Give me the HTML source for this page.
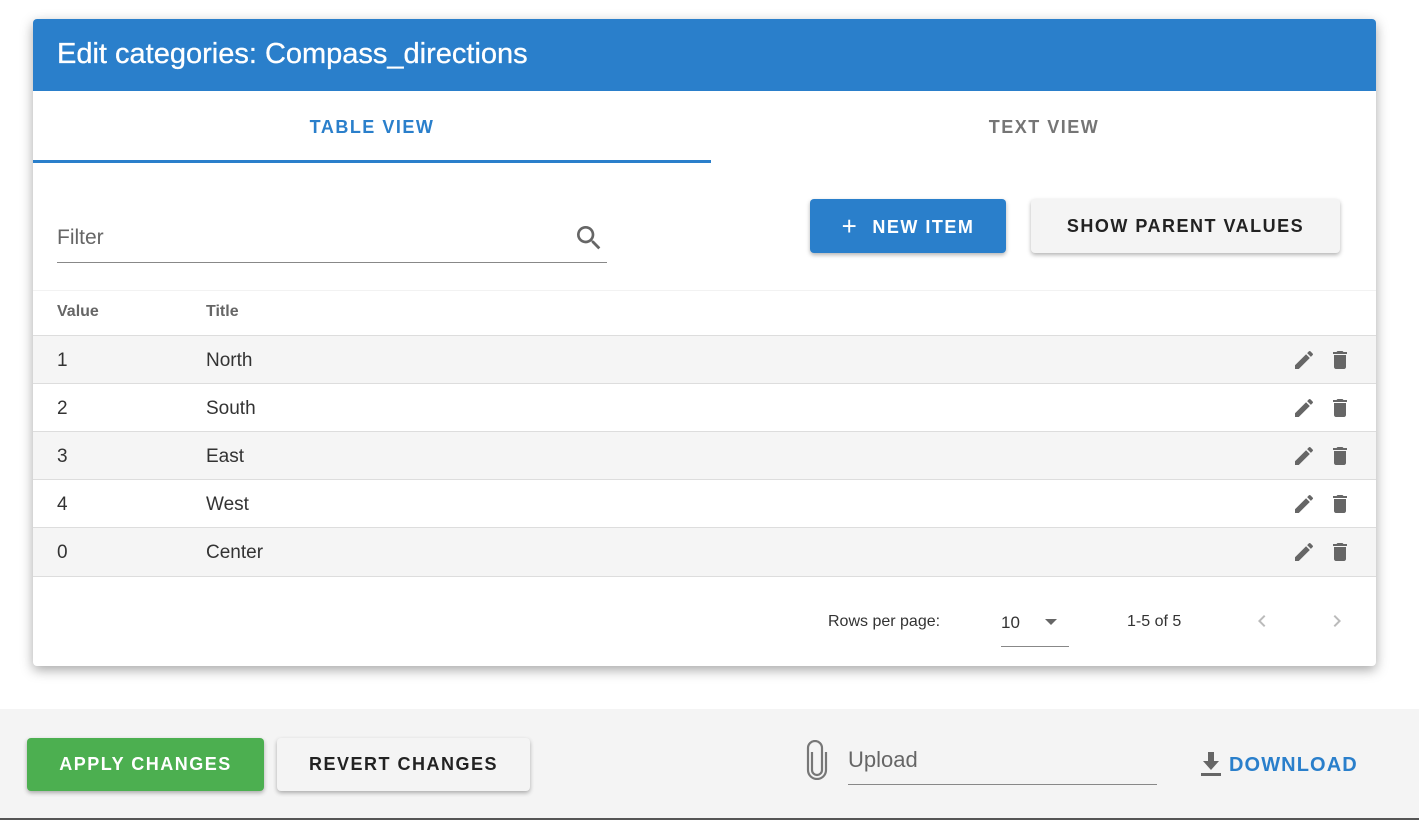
<!DOCTYPE html>
<html><head><meta charset="utf-8"><style>
*{box-sizing:border-box;margin:0;padding:0}
body{width:1419px;height:820px;background:#fff;font-family:"Liberation Sans",Roboto,sans-serif;position:relative;overflow:hidden;color:#333}
.card{position:absolute;left:33px;top:19px;width:1343px;height:647px;background:#fff;border-radius:4px;box-shadow:0 4px 12px rgba(0,0,0,.35);overflow:hidden}
.hdr{height:72px;background:#2a7fcb;color:#fff;font-size:29px;padding:19px 24px;-webkit-text-stroke:0.3px #fff}
.tab{position:absolute;top:72px;height:71px;width:678px;text-align:center;line-height:72px;font-size:18px;letter-spacing:1.5px;font-weight:bold}
.ab{position:absolute}
.btn{position:absolute;border-radius:4px;font-size:18px;font-weight:bold;letter-spacing:1.5px;text-align:center;box-shadow:0 2px 4px rgba(0,0,0,.3)}
.row{position:absolute;left:0;width:1343px;height:48px;border-bottom:1px solid #ddd;font-size:19px;color:#333}
.row span{position:absolute;top:14px}
</style></head><body>
<div class="card">
<div class="hdr">Edit categories: Compass_directions</div>
<div class="tab" style="left:0;color:#2a7fcb">TABLE VIEW</div>
<div class="ab" style="left:0;top:141px;width:678px;height:3px;background:#2a7fcb"></div>
<div class="tab" style="left:672px;color:#757575">TEXT VIEW</div>
<div class="ab" style="left:24px;top:207px;font-size:21px;color:#666">Filter</div>
<svg class="ab" style="left:540px;top:203px" width="32" height="32" viewBox="0 0 24 24"><path fill="#666" d="M15.5 14h-.79l-.28-.27A6.47 6.47 0 0 0 16 9.5 6.5 6.5 0 1 0 9.5 16c1.61 0 3.09-.59 4.23-1.57l.27.28v.79l5 4.99L20.49 19l-4.99-5zm-6 0C7.01 14 5 11.99 5 9.5S7.01 5 9.5 5 14 7.01 14 9.5 11.99 14 9.5 14z"/></svg>
<div class="ab" style="left:24px;top:243px;width:550px;height:1px;background:#888"></div>
<div class="btn" style="left:777px;top:180px;width:196px;height:54px;background:#2a7fcb;color:#fff;line-height:54px"><span style="font-size:26px;font-weight:normal;vertical-align:-2px;margin-right:14px">+</span>NEW ITEM</div>
<div class="btn" style="left:998px;top:180px;width:309px;height:54px;background:#f4f4f4;color:#222;line-height:54px">SHOW PARENT VALUES</div>
<div class="ab" style="left:0;top:271px;width:1343px;height:46px;border-bottom:1px solid #ddd;border-top:1px solid #f2f2f2;font-size:16px;font-weight:bold;color:#666">
<span class="ab" style="left:24px;top:12px">Value</span><span class="ab" style="left:173px;top:12px">Title</span></div>
<div class="row" style="top:317px;background:#f5f5f5"><span style="left:24px">1</span><span style="left:173px">North</span></div>
<div class="row" style="top:365px"><span style="left:24px">2</span><span style="left:173px">South</span></div>
<div class="row" style="top:413px;background:#f5f5f5"><span style="left:24px">3</span><span style="left:173px">East</span></div>
<div class="row" style="top:461px"><span style="left:24px">4</span><span style="left:173px">West</span></div>
<div class="row" style="top:509px;background:#f5f5f5;height:49px"><span style="left:24px">0</span><span style="left:173px">Center</span></div>
<div class="ab" style="left:795px;top:594px;font-size:16px;color:#333">Rows per page:</div>
<div class="ab" style="left:968px;top:594px;font-size:17px;color:#333">10</div>
<div class="ab" style="left:1012px;top:600px;border:6px solid transparent;border-top:6px solid #666;border-bottom:0;width:0;height:0"></div>
<div class="ab" style="left:968px;top:627px;width:68px;height:1px;background:#888"></div>
<div class="ab" style="left:1094px;top:594px;font-size:16px;color:#333">1-5 of 5</div>
<svg class="ab" style="left:1217px;top:590px" width="24" height="24" viewBox="0 0 24 24"><path fill="#bbb" d="M15.41 7.41 14 6l-6 6 6 6 1.41-1.41L10.83 12z"/></svg>
<svg class="ab" style="left:1292px;top:590px" width="24" height="24" viewBox="0 0 24 24"><path fill="#bbb" d="M10 6 8.59 7.41 13.17 12l-4.58 4.59L10 18l6-6z"/></svg>
</div>
<div class="ab" style="left:0;top:709px;width:1419px;height:111px;background:#f4f4f4;border-bottom:2px solid #555"></div>
<div class="btn" style="left:27px;top:738px;width:237px;height:53px;background:#4caf50;color:#fff;line-height:53px">APPLY CHANGES</div>
<div class="btn" style="left:277px;top:738px;width:253px;height:53px;background:#f4f4f4;color:#222;line-height:53px">REVERT CHANGES</div>
<svg class="ab" style="left:803px;top:740px" width="28" height="40" viewBox="0 0 14 20"><path fill="none" stroke="#777" stroke-width="1.1" d="M4.5 6v9a2.5 2.5 0 0 0 5 0V4a3.5 3.5 0 0 0-7 0v11a4.5 4.5 0 0 0 9 0V6"/></svg>
<div class="ab" style="left:848px;top:747px;font-size:22px;color:#666">Upload</div>
<div class="ab" style="left:848px;top:784px;width:309px;height:1px;background:#888"></div>
<svg class="ab" style="left:1199px;top:750px" width="24" height="28" viewBox="0 0 24 28"><path fill="#666" d="M9 2h6v9h5l-8 9-8-9h5z"/><rect x="2" y="23" width="20" height="3" fill="#666"/></svg>
<div class="ab" style="left:1229px;top:754px;font-size:20px;font-weight:bold;letter-spacing:1.1px;color:#2a7fcb">DOWNLOAD</div>
<script>
var h='';[336,384,432,480,528].forEach(function(t){
h+='<svg class="ab" style="left:1292px;top:'+(t+12)+'px" width="24" height="24" viewBox="0 0 24 24"><path fill="#666" d="M3 17.25V21h3.75L17.81 9.94l-3.75-3.75L3 17.25zM20.71 7.04a1 1 0 0 0 0-1.41l-2.34-2.34a1 1 0 0 0-1.41 0l-1.830 1.83 3.75 3.75 1.83-1.83z"/></svg>';
h+='<svg class="ab" style="left:1328px;top:'+(t+12)+'px" width="24" height="24" viewBox="0 0 24 24"><path fill="#666" d="M6 19c0 1.1.9 2 2 2h8c1.1 0 2-.9 2-2V7H6v12zM19 4h-3.5l-1-1h-5l-1 1H5v2h14V4z"/></svg>';});
document.body.insertAdjacentHTML('beforeend',h);
</script>
</body></html>
